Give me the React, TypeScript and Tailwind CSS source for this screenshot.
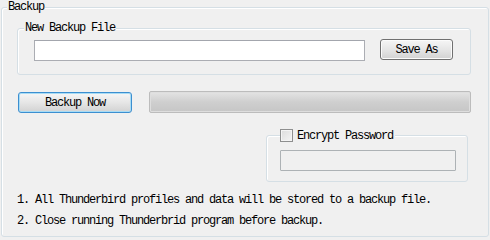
import React from 'react';

const font = { fontFamily: '"Liberation Mono", "DejaVu Sans Mono", monospace' };

function GroupLabel({ children, className }: { children: React.ReactNode; className: string }) {
  return (
    <span className={`absolute bg-[#f0f0f0] px-[1px] text-[12px] leading-[12px] tracking-[-1.2px] text-black ${className}`}>
      {children}
    </span>
  );
}

function WinButton({ label, focused, className }: { label: string; focused?: boolean; className: string }) {
  return (
    <button
      className={`flex items-center justify-center rounded-[3px] border bg-gradient-to-b from-[#f6f6f6] via-[#e6e6e6] to-[#d2d2d2] text-[12px] leading-[12px] tracking-[-1.2px] text-black ${
        focused ? 'border-[#3c8fd0] shadow-[inset_0_0_0_1px_#a8dcf5]' : 'border-[#707070] shadow-[inset_0_0_0_1px_#fbfbfb]'
      } ${className}`}
    >
      {label}
    </button>
  );
}

export default function App() {
  return (
    <div className="h-[240px] w-[490px] overflow-hidden bg-[#f0f0f0] pl-[1px] pt-[7px]" style={font}>
      <div className="relative h-[230px] w-[488px] rounded-[3px] border border-[#d5dfe5] shadow-[inset_1px_1px_0_#fff]">
        <GroupLabel className="left-[5px] top-[-7px]">Backup</GroupLabel>

        {/* New Backup File */}
        <div className="relative ml-[15px] mt-[20px] h-[47px] w-[454px] rounded-[3px] border border-[#d5dfe5] shadow-[inset_1px_1px_0_#fff]">
          <GroupLabel className="left-[6px] top-[-7px]">New Backup File</GroupLabel>
          <div className="ml-[16px] mt-[10px] flex items-start">
            <div className="mt-[1px] h-[21px] w-[331px] border border-[#abadb3] border-t-[#a3a6ad] bg-white" />
            <WinButton label="Save As" className="ml-[15px] h-[21px] w-[73px]" />
          </div>
        </div>

        {/* Backup row */}
        <div className="ml-[16px] mt-[16px] flex items-start">
          <WinButton label="Backup Now" focused className="mt-[1px] h-[21px] w-[114px]" />
          <div className="ml-[17px] h-[22px] w-[322px] rounded-[2px] border border-[#bcbcbc] bg-gradient-to-b from-[#e4e4e4] via-[#cfcfcf] to-[#c6c6c6] shadow-[inset_0_0_0_1px_#dedede]" />
        </div>

        {/* Encrypt Password */}
        <div className="relative ml-[264px] mt-[22px] h-[47px] w-[202px] rounded-[3px] border border-[#d5dfe5] shadow-[inset_1px_1px_0_#fff]">
          <div className="absolute left-[13px] top-[-7px] flex items-center bg-[#f0f0f0] pr-[2px]">
            <span className="h-[13px] w-[13px] border border-[#8e8f8f] bg-gradient-to-br from-[#dcdcdc] to-[#f4f4f4] shadow-[inset_0_0_0_1px_#f4f4f4]" />
            <span className="ml-[4px] text-[12px] leading-[12px] tracking-[-1.2px] text-black">Encrypt Password</span>
          </div>
          <div className="ml-[13px] mt-[14px] h-[21px] w-[176px] rounded-[1px] border border-[#adb2b5] bg-[#f0f0f0]" />
        </div>

        {/* Notes */}
        <div className="ml-[15px] mt-[12px] flex flex-col gap-[9px] text-[12px] leading-[12px] tracking-[-1.2px] text-black">
          <span>1. All Thunderbird profiles and data will be stored to a backup file.</span>
          <span>2. Close running Thunderbrid program before backup.</span>
        </div>
      </div>
    </div>
  );
}
